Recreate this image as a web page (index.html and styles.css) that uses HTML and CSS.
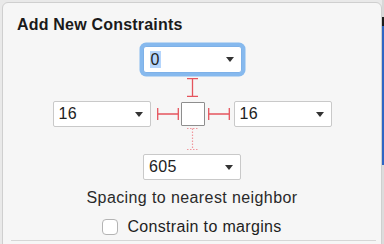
FILE: index.html
```html
<!DOCTYPE html>
<html>
<head>
<meta charset="utf-8">
<link rel="stylesheet" href="styles.css">
</head>
<body>
<div class="screen">
  <div class="panel">
    <h1 class="title">Add New Constraints</h1>
    <div class="editor">
      <div class="select select-focus"><span class="value"><span class="selected">0</span></span><span class="caret"></span></div>
      <svg class="strut-v" width="11" height="19" viewBox="0 0 11 19"><path d="M0 0.7H11M5.5 0.7V18.3M0 18.3H11" stroke="#e5545d" stroke-width="1.3" fill="none"/></svg>
      <div class="row">
        <div class="select"><span class="value">16</span><span class="caret"></span></div>
        <svg class="strut-h" width="22" height="12" viewBox="0 0 22 12"><path d="M0.7 0V12M0.7 6H21.3M21.3 0V12" stroke="#e5545d" stroke-width="1.3" fill="none"/></svg>
        <div class="box"></div>
        <svg class="strut-h" width="22" height="12" viewBox="0 0 22 12"><path d="M0.7 0V12M0.7 6H21.3M21.3 0V12" stroke="#e5545d" stroke-width="1.3" fill="none"/></svg>
        <div class="select"><span class="value">16</span><span class="caret"></span></div>
      </div>
      <svg class="strut-v strut-dotted" width="11" height="22" viewBox="0 0 11 22"><path d="M0 0.5H11M5.5 0.5V21.5M0 21.5H11" stroke="#f0979d" stroke-width="1.2" stroke-dasharray="1.5 1.5" fill="none"/></svg>
      <div class="select"><span class="value">605</span><span class="caret"></span></div>
    </div>
    <p class="hint">Spacing to nearest neighbor</p>
    <label class="check"><span class="checkbox"></span><span class="check-label">Constrain to margins</span></label>
    <div class="sep"></div>
  </div>
  <div class="edge">
    <div class="edge-top"></div>
    <div class="edge-dark"></div>
    <div class="edge-blue"></div>
    <div class="edge-rest"></div>
  </div>
</div>
</body>
</html>
```

FILE: styles.css
```css
html, body {
  margin: 0;
  padding: 0;
}
body {
  width: 384px;
  height: 244px;
  overflow: hidden;
  background: #e9e9e9;
  font-family: "Liberation Sans", Arial, sans-serif;
  color: #1e1e1e;
}
.screen {
  display: flex;
  height: 244px;
}
.panel {
  flex: 1;
  margin: 2px 0 0 2px;
  height: 250px;
  box-sizing: border-box;
  background: #f6f6f6;
  border: 1px solid #cfcfcf;
  border-radius: 6px;
  padding: 12px 0 0 14px;
  display: flex;
  flex-direction: column;
}
.title {
  margin: 0;
  font-size: 16px;
  line-height: 19px;
  font-weight: bold;
  letter-spacing: 0.2px;
  color: #1a1a1a;
}
.editor {
  margin: 12px 0 0 -14px;
  display: flex;
  flex-direction: column;
  align-items: center;
}
.select {
  width: 98px;
  height: 26px;
  box-sizing: border-box;
  background: #fff;
  border: 1px solid #c9c9c9;
  border-radius: 2px;
  display: flex;
  align-items: center;
  justify-content: space-between;
  padding: 0 7px 0 5px;
  font-size: 16px;
  letter-spacing: 0.3px;
  color: #222;
}
.select-focus {
  width: 99px;
  height: 27px;
  border-color: #7eb1e8;
  border-radius: 3px;
  box-shadow: 0 0 0 3.5px #86b9ee;
  padding-left: 6px;
}
.selected {
  background: #b5d5fc;
  padding: 0 1px;
}
.caret {
  width: 0;
  height: 0;
  border-left: 4px solid transparent;
  border-right: 4px solid transparent;
  border-top: 5px solid #333;
}
.strut-v {
  display: block;
  margin-top: 5px;
}
.strut-dotted {
  margin-top: 1px;
}
.row {
  margin-top: 4px;
  display: flex;
  align-items: center;
  height: 26px;
}
.row .strut-h:nth-child(2) { margin-left: 6px; }
.row .box { margin-left: 2px; }
.row .strut-h:nth-child(4) { margin-left: 3px; }
.row .select:last-child { margin-left: 4px; }
.strut-h {
  display: block;
}
.box {
  width: 24px;
  height: 24px;
  box-sizing: border-box;
  background: #fff;
  border: 1px solid #8e8e8e;
  border-radius: 1px;
}
.editor > .select:last-child {
  margin-top: 4px;
}
.hint {
  margin: 8px 0 0 -14px;
  text-align: center;
  font-size: 16px;
  line-height: 19px;
  letter-spacing: 0.4px;
  color: #2a2a2a;
}
.check {
  margin: 11px 0 0 -14px;
  display: flex;
  align-items: center;
  justify-content: center;
  height: 18px;
  font-size: 16px;
  letter-spacing: 0.33px;
  color: #1e1e1e;
}
.checkbox {
  width: 16px;
  height: 16px;
  box-sizing: border-box;
  background: #fff;
  border: 1px solid #b4b4b4;
  border-radius: 4px;
  margin-right: 9px;
}
.sep {
  margin: 4px 5px 0 -6px;
  height: 1px;
  background: #d6d6d6;
}
.edge {
  width: 2px;
  display: flex;
  flex-direction: column;
}
.edge-top { height: 17px; background: #d8d8d8; }
.edge-dark { height: 9px; background: #1b1b1b; }
.edge-blue { height: 139px; background: #2f66c4; }
.edge-rest { flex: 1; background: #dcdcdc; }
```
